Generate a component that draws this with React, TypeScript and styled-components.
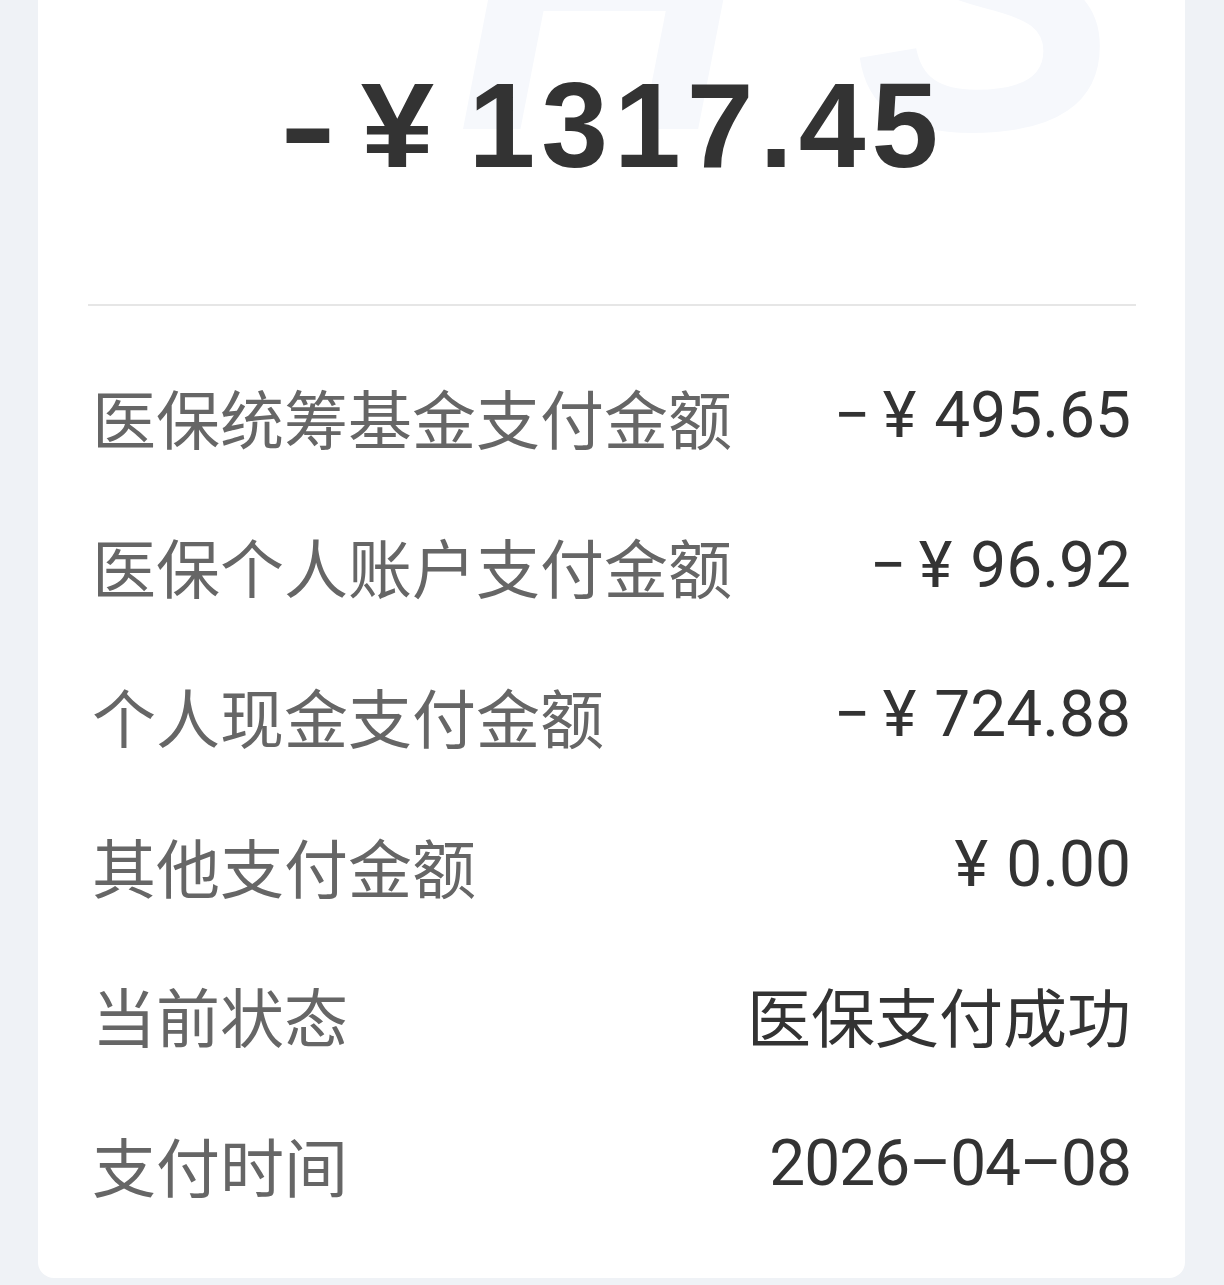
import React from 'react';
import styled, { createGlobalStyle } from 'styled-components';

const GlobalStyle = createGlobalStyle`
  html, body {
    margin: 0;
    padding: 0;
    background: #eff2f6;
  }
  body {
    font-family: Roboto, "Noto Sans CJK SC", sans-serif;
  }
`;

const Page = styled.div`
  width: 1224px;
  height: 1285px;
  box-sizing: border-box;
  padding: 0 39px 7px 38px;
  overflow: hidden;
`;

const Card = styled.div`
  position: relative;
  height: 1278px;
  box-sizing: border-box;
  background: #ffffff;
  border-radius: 0 0 16px 16px;
  padding: 0 49px 38px 50px;
  overflow: hidden;
`;

const Watermark = styled.div`
  position: absolute;
  top: -209px;
  left: 418px;
  font-family: "Liberation Sans", Arial, sans-serif;
  font-weight: 700;
  font-style: italic;
  font-size: 400px;
  line-height: 1;
  color: #f6f8fc;
  letter-spacing: 110px;
  pointer-events: none;
  user-select: none;
`;

const AmountBlock = styled.div`
  position: relative;
  height: 304px;
  display: flex;
  align-items: center;
  justify-content: center;
  padding-left: 8px;
`;

const Amount = styled.div`
  font-family: "Liberation Sans", Arial, sans-serif;
  font-weight: 700;
  font-size: 120px;
  color: #333333;
  margin-top: -54px;
  white-space: nowrap;
`;

const BigSign = styled.span`
  display: inline-block;
  transform: scaleX(1.4);
  margin-right: 36px;
`;

const BigYen = styled.span`
  display: inline-block;
  transform: scaleX(1.1);
  margin-right: 38px;
`;

const BigDigits = styled.span`
  letter-spacing: 6px;
`;

const Divider = styled.div`
  height: 2px;
  background: #e6e6e6;
`;

const List = styled.div`
  padding: 35px 5px 0 4px;
`;

const Row = styled.div`
  height: 149.6px;
  display: flex;
  align-items: center;
  justify-content: space-between;
`;

const Label = styled.span`
  font-family: "Noto Sans CJK SC", sans-serif;
  font-size: 64px;
  color: #666666;
`;

const Value = styled.span`
  font-family: Roboto, "Noto Sans CJK SC", sans-serif;
  font-size: 64px;
  color: #333333;
  white-space: nowrap;
`;

const DateValue = styled(Value)`
  letter-spacing: -1px;
`;

const Sign = styled.span`
  margin-right: 12px;
`;

const Yen = styled.span`
  margin-right: 18px;
`;

type Item = { label: string; sign?: boolean; yen?: boolean; date?: boolean; text: string };

const items: Item[] = [
  { label: '医保统筹基金支付金额', sign: true, yen: true, text: '495.65' },
  { label: '医保个人账户支付金额', sign: true, yen: true, text: '96.92' },
  { label: '个人现金支付金额', sign: true, yen: true, text: '724.88' },
  { label: '其他支付金额', yen: true, text: '0.00' },
  { label: '当前状态', text: '医保支付成功' },
  { label: '支付时间', date: true, text: '2026–04–08' },
];

export default function App() {
  return (
    <>
      <GlobalStyle />
      <Page>
        <Card>
          <Watermark>HS</Watermark>
          <AmountBlock>
            <Amount>
              <BigSign>-</BigSign>
              <BigYen>¥</BigYen>
              <BigDigits>1317.45</BigDigits>
            </Amount>
          </AmountBlock>
          <Divider />
          <List>
            {items.map(item =>
              item.date ? (
                <Row key={item.label}>
                  <Label>{item.label}</Label>
                  <DateValue>{item.text}</DateValue>
                </Row>
              ) : (
                <Row key={item.label}>
                  <Label>{item.label}</Label>
                  <Value>
                    {item.sign && <Sign>−</Sign>}
                    {item.yen && <Yen>¥</Yen>}
                    {item.text}
                  </Value>
                </Row>
              )
            )}
          </List>
        </Card>
      </Page>
    </>
  );
}
